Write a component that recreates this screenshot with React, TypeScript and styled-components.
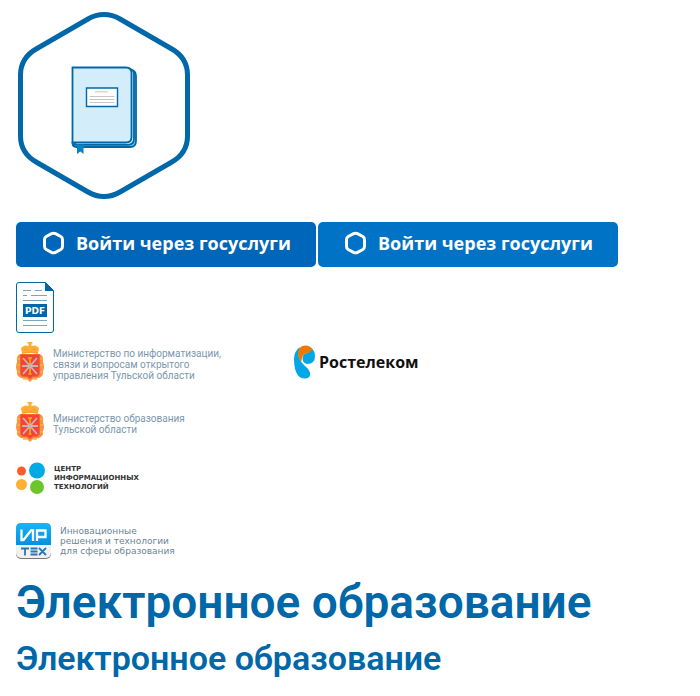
import React from 'react';
import styled, { createGlobalStyle } from 'styled-components';

const GlobalStyle = createGlobalStyle`
  * { box-sizing: border-box; }
  body { margin: 0; background: #fff; font-family: "Open Sans", "Noto Sans", sans-serif; }
  svg { display: block; flex: none; }
`;

const Page = styled.main`
  padding: 8px 16px;
`;

const LoginRow = styled.div`
  display: flex;
  flex-wrap: wrap;
  gap: 2px;
  margin-top: 18px;
`;

const LoginButton = styled.button<{ $tone: string }>`
  display: flex;
  align-items: center;
  gap: 11px;
  width: 300px;
  height: 45px;
  padding: 0 26px 3px;
  border: 0;
  border-radius: 5px;
  background: ${(p) => p.$tone};
  color: #fff;
  font: 700 18px/24px "Open Sans", sans-serif;
  white-space: nowrap;
  cursor: pointer;
`;

const FileLink = styled.a`
  display: block;
  width: fit-content;
  margin-top: 15px;
`;

const Partners = styled.div`
  display: grid;
  grid-template-columns: 278px 1fr;
  grid-template-rows: 40px 40px 41px 36px;
  row-gap: 20px;
  align-items: start;
  margin-top: 9px;
`;

const Partner = styled.a<{ $gap: number }>`
  grid-column: 1;
  display: flex;
  align-items: center;
  gap: ${(p) => p.$gap}px;
  width: fit-content;
  text-decoration: none;
`;

const Telecom = styled(Partner)`
  grid-column: 2;
  grid-row: 1;
  align-self: center;
  color: #101010;
  font: 700 16px/24px "Open Sans", sans-serif;
`;

const Caption = styled.span<{ $kind: 'ministry' | 'centre' | 'firm' }>`
  white-space: pre-line;
  ${(p) => p.$kind === 'ministry' && 'color:#7b98ab; font:400 10px/11px Roboto, sans-serif; padding-top:4px;'}
  ${(p) => p.$kind === 'centre' && 'color:#333; font:700 7px/9px "DejaVu Sans", sans-serif;'}
  ${(p) => p.$kind === 'firm' && 'color:#6b8595; font:400 9px/10px "DejaVu Sans", sans-serif;'}
`;

const Title = styled.h1`
  margin: 11px 0 0;
  color: #0067a8;
  font: 600 46px/64px Roboto, sans-serif;
`;

const Subtitle = styled(Title).attrs({ as: 'h2' })`
  margin: 0;
  font-size: 34px;
  line-height: 48px;
`;

const Diary = () => (
  <svg width="176" height="196" viewBox="16 8 176 196" fill="none" role="img" aria-label="Дневник">
    <path d="M20.5 75C20.5 62 27 54 37 48.5L88 19C98 13 110 13 120 19L171 48.5C181 54 187.5 62 187.5 75V136C187.5 149 181 157 171 162.5L120 192C110 198 98 198 88 192L37 162.5C27 157 20.5 149 20.5 136Z" stroke="#0067a8" strokeWidth="5" />
    <g stroke="#0067a8" strokeWidth="1.8">
      <path d="M72.5 142v1q0 4 4 4H130q6 0 6-6V76q0-5-5-6Z" fill="#a5cfe6" />
      <path d="M74 144.8H128q6 0 6-6V74q0-4-4-5Z" fill="#d3edfa" />
      <path d="M72.5 67.5H126q5.500 0 5.500 5.500V137q0 5.500-5.500 5.500H72.500Z" fill="#d3edfa" />
      <path d="M86.500 88H117.500V106.500H86.500Z" fill="#fff" strokeWidth="1.400" />
    </g>
    <path d="M95 91.800h13M89.500 96.500h25M89.500 99.500h25M89.500 102.500h25" stroke="#c8c5c9" />
    <path d="M77 144.500h6.500v9.500l-3.200-2.500-3.300 2.500Z" fill="#0583c7" />
  </svg>
);

const StateMark = () => (
  <svg width="23" height="24" viewBox="0 0 23 24" fill="none" stroke="#fff" strokeWidth="3" aria-hidden="true">
    <path d="M2.500 8.500Q2.500 6.500 4.200 5.500L9.500 2.700Q11.500 1.700 13.500 2.700L18.800 5.500Q20.500 6.500 20.500 8.500V15.500Q20.500 17.500 18.800 18.500L13.500 21.300Q11.500 22.300 9.500 21.300L4.200 18.500Q2.500 17.500 2.500 15.500Z" />
  </svg>
);

const PdfFile = () => (
  <svg width="38" height="51" viewBox="0 0 38 51" role="img" aria-label="PDF">
    <path d="M3 .5H29.500L37.500 8.500V48q0 2.500-2.500 2.500H3Q.5 50.500.5 48V3Q.5.500 3 .500Z" fill="#fff" stroke="#0067a8" />
    <path d="M29 0L38 9H29Z" fill="#0067a8" />
    <path d="M7 8.500h8M19 8.500h7M7 13.500h4M15 13.500h16M7 18.500h24M7 38.500h24M7 43.500h24" stroke="#7ba5bd" />
    <path d="M7 22H31V35H7Z" fill="#0067a8" />
    <text x="19" y="32" fill="#fff" textAnchor="middle" fontFamily="DejaVu Sans, sans-serif" fontWeight="700" fontSize="9">PDF</text>
  </svg>
);

const Crest = () => (
  <svg width="28" height="40" viewBox="0 0 28 40" aria-hidden="true">
    <path d="M4 12Q0 14 1 20Q-1 25 1 29Q0 34 5 36L11 37 14 40 17 37 23 36Q28 34 27 29Q29 25 27 20Q28 14 24 12Z" fill="#f79248" />
    <path d="M1 17h3M0 23h4M1 30h4M24 17h3M24 23h4M23 30h4M7 37h4M17 37h4" stroke="#fbb63c" strokeWidth="1.500" />
    <path d="M4.500 12.500H23.500V31Q23.500 34.500 20 34.500H17L14 37 11 34.500H8Q4.500 34.500 4.500 31Z" fill="#f84238" stroke="#ef692e" />
    <path d="M6 12L5.500 8.500Q4 6 7 4.500Q9 3 12.500 4V1.500h-1V0h5v1.500h-1V4Q19 3 21 4.500Q24 6 22.500 8.500L22 12Q14 10 6 12Z" fill="#ffae35" />
    <path d="M8 8Q10 5 12 9M16 9Q18 5 20 8M6.500 11Q14 9 21.500 11" fill="none" stroke="#f79328" strokeWidth=".7" />
    <path d="M14 15V33M12 16h4M12.500 32h3" stroke="#fa951d" strokeWidth="2" />
    <path d="M7 16L21 32M21 16L7 32M6 24H22" stroke="#c9b5b2" strokeWidth="1.800" />
  </svg>
);

const TelecomMark = () => (
  <svg width="22" height="34" viewBox="0 0 22 34" aria-hidden="true">
    <path d="M6 2Q0 6 0 14Q0 25 4 30.500Q7 34 12 33.500Q17 32.500 16 27.500Q15 24 11 21Q8 18.500 6 15Q3 9 6 2Z" fill="#00a7e6" />
    <path d="M14 1Q21 4 21 11Q21 19 13 19Q9 18 8.500 14Q8.500 8.500 13 8Q16 7 16 4Q16 2 14 1Z" fill="#00a7e6" />
    <path d="M6.500 16Q3.500 12 4 7Q5.500.500 11 .500Q17 .500 18 5Q17 8 12.500 8Q8 9 7.500 16Z" fill="#ef7900" />
  </svg>
);

const CentreMark = () => (
  <svg width="30" height="32" viewBox="0 0 30 32" aria-hidden="true">
    <circle cx="5.500" cy="9" r="4.500" fill="#fc5c2b" />
    <circle cx="21" cy="8.500" r="8" fill="#00abe4" />
    <circle cx="5.500" cy="22.500" r="5.500" fill="#fdb033" />
    <circle cx="21" cy="25" r="7" fill="#6bc52b" />
  </svg>
);

const FirmMark = () => (
  <svg width="35" height="36" viewBox="0 0 35 36" aria-hidden="true">
    <defs>
      <linearGradient id="firmBlue" x1="0" y1="0" x2="0" y2="1">
        <stop stopColor="#15b6f5" />
        <stop offset="1" stopColor="#078ee1" />
      </linearGradient>
    </defs>
    <rect y="1" width="35" height="35" rx="5" fill="#777" />
    <rect width="35" height="35" rx="5" fill="#f0f0f0" />
    <path d="M0 22V5Q0 0 5 0H30Q35 0 35 5V22Z" fill="url(#firmBlue)" />
    <path d="M5.500 6.500V17H7.500L15 7.500H17V18M21 18V7.500H29.500V14H21" fill="none" stroke="#fff" strokeWidth="2.300" />
    <path d="M5 25.500h8M9 25.500v7M14.500 25.500h7M14.500 28.500h7M14.500 31.500h7M23 25l7 7M30 25l-7 7" stroke="#2b75b3" strokeWidth="1.800" />
  </svg>
);

export default function App() {
  return (
    <>
      <GlobalStyle />
      <Page>
        <Diary />
        <LoginRow>
          {['#0066b9', '#0073c6'].map((tone) => (
            <LoginButton key={tone} type="button" $tone={tone}>
              <StateMark />
              Войти через госуслуги
            </LoginButton>
          ))}
        </LoginRow>
        <FileLink href="#pdf"><PdfFile /></FileLink>
        <Partners>
          <Partner href="#it" $gap={9}>
            <Crest />
            <Caption $kind="ministry">{'Министерство по информатизации,\nсвязи и вопросам открытого\nуправления Тульской области'}</Caption>
          </Partner>
          <Telecom href="#telecom" $gap={3}>
            <TelecomMark />
            Ростелеком
          </Telecom>
          <Partner href="#education" $gap={9}>
            <Crest />
            <Caption $kind="ministry">{'Министерство образования\nТульской области'}</Caption>
          </Partner>
          <Partner href="#centre" $gap={8}>
            <CentreMark />
            <Caption $kind="centre">{'ЦЕНТР\nИНФОРМАЦИОННЫХ\nТЕХНОЛОГИЙ'}</Caption>
          </Partner>
          <Partner href="#firm" $gap={9}>
            <FirmMark />
            <Caption $kind="firm">{'Инновационные\nрешения и технологии\nдля сферы образования'}</Caption>
          </Partner>
        </Partners>
        <Title>Электронное образование</Title>
        <Subtitle>Электронное образование</Subtitle>
      </Page>
    </>
  );
}
